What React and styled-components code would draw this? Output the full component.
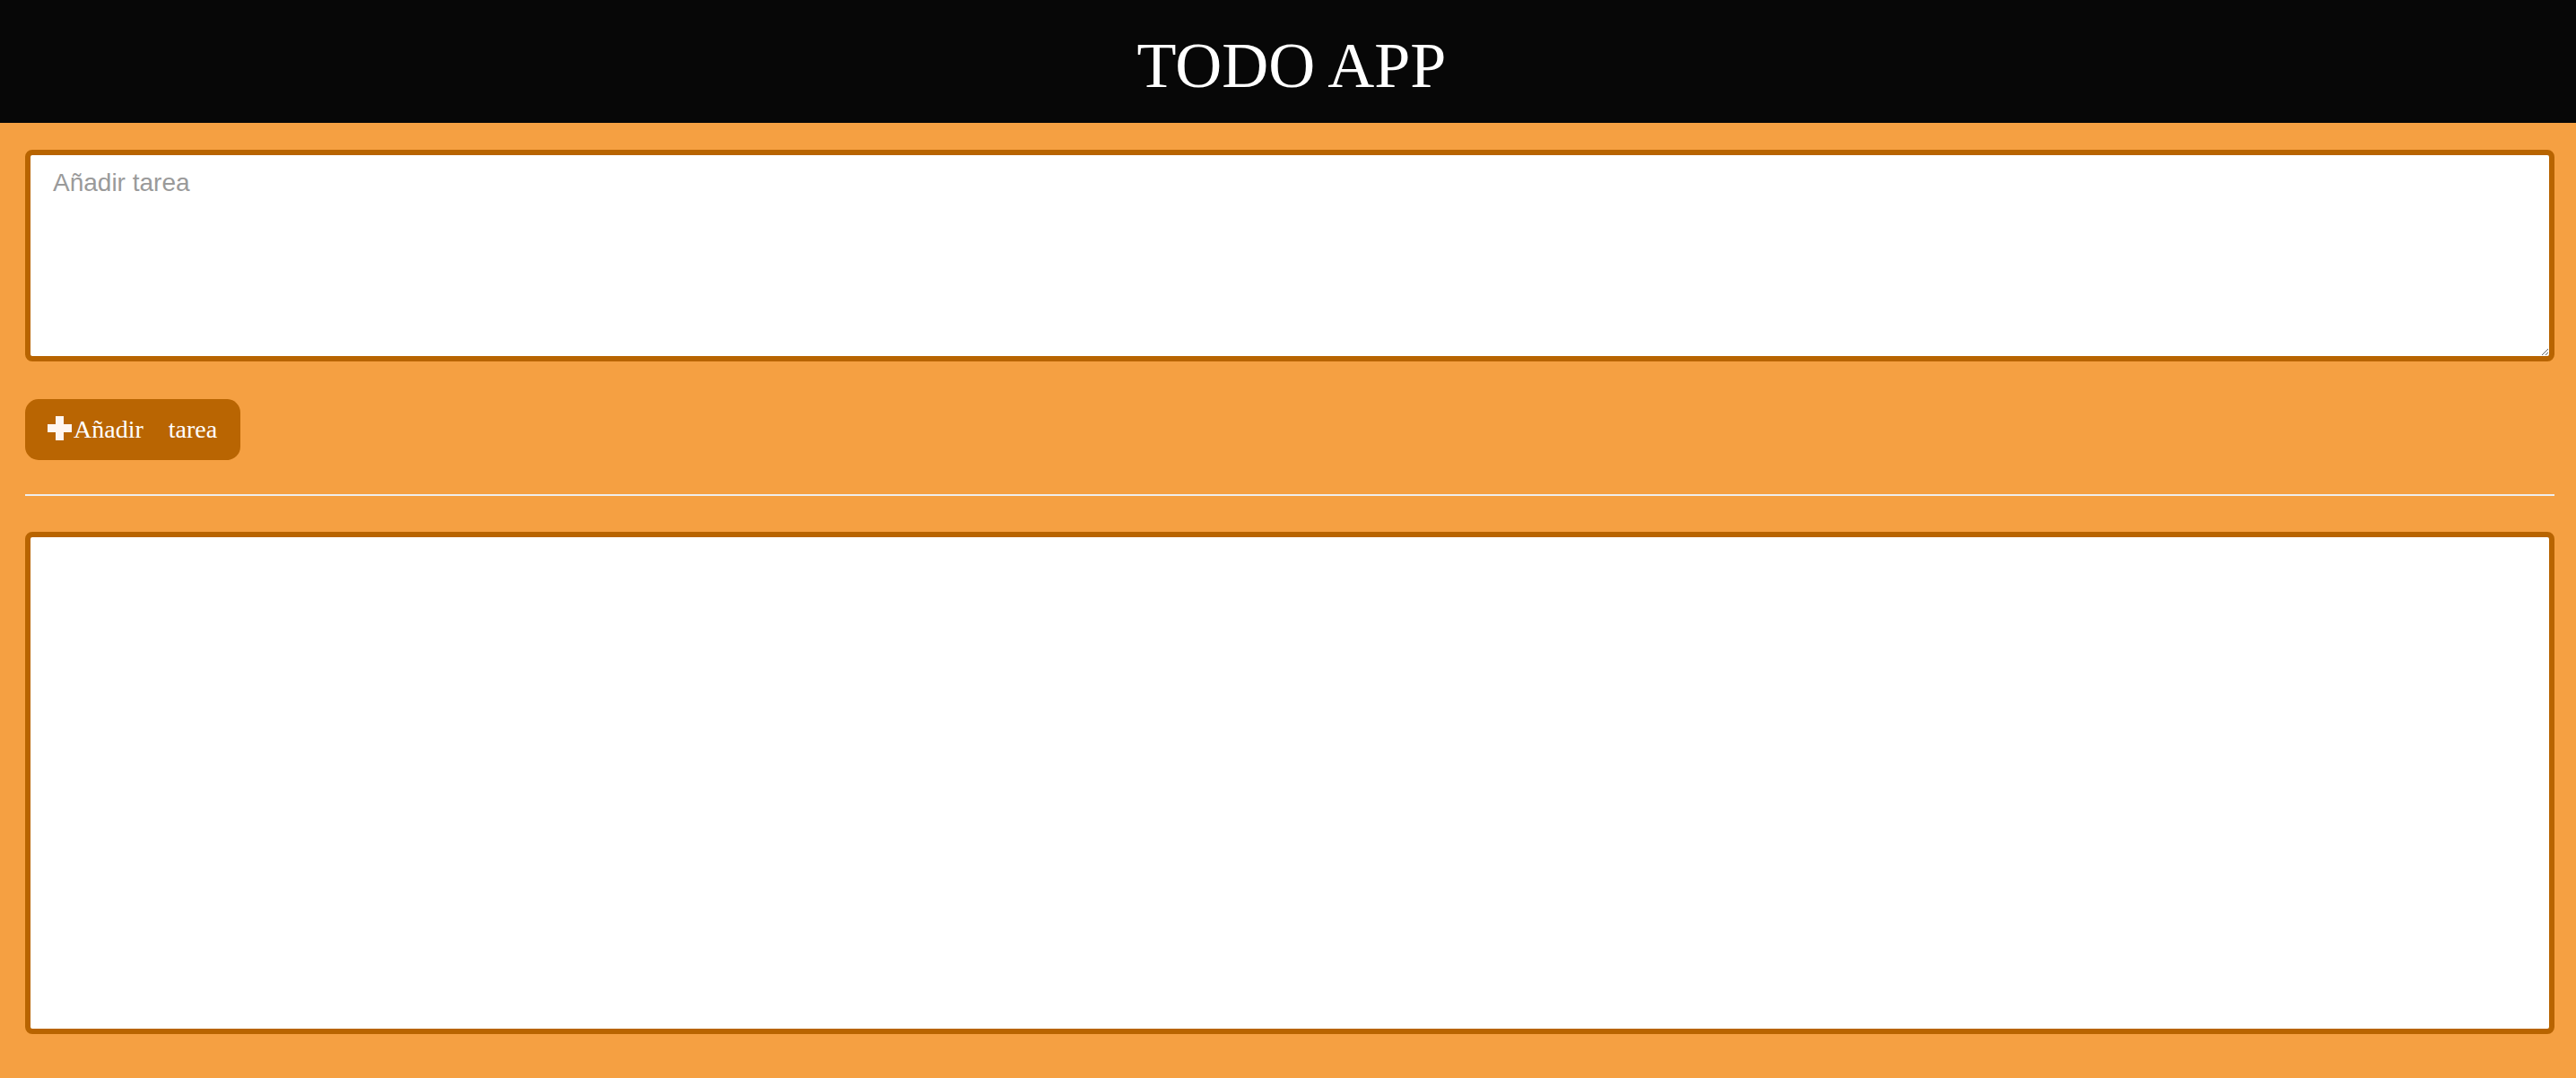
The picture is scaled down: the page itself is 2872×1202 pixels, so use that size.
import React, { useState } from "react";
import styled, { createGlobalStyle } from "styled-components";

const GlobalStyle = createGlobalStyle`
  html, body {
    margin: 0;
    padding: 0;
    background: #f5a042;
  }
  body {
    font-family: "Liberation Serif", "Times New Roman", serif;
  }
`;

const Page = styled.div`
  height: 100vh;
  overflow: hidden;
  background: #f5a042;
`;

const Header = styled.header`
  background: #070707;
  height: 137px;
  padding: 37px 0 0 8px;
  box-sizing: border-box;
  .title {
    margin: 0;
    text-align: center;
    color: #ffffff;
    font-size: 72px;
    font-weight: normal;
    line-height: 1;
  }
`;

const Main = styled.main`
  padding: 30px 24px 0 28px;
  display: flex;
  flex-direction: column;
`;

const TaskInput = styled.textarea`
  display: block;
  box-sizing: border-box;
  width: 100%;
  height: 236px;
  margin: 0;
  padding: 15px 25px;
  border: 6px solid #b86400;
  border-radius: 8px;
  background: #ffffff;
  font-family: "Liberation Sans", Arial, sans-serif;
  font-size: 28px;
  color: #333;
  outline: none;
  &::placeholder {
    color: #9a9a9a;
  }
`;

const AddButton = styled.button`
  align-self: flex-start;
  margin-top: 42px;
  height: 68px;
  display: inline-flex;
  align-items: center;
  gap: 2px;
  padding: 0 26px 0 25px;
  border: none;
  border-radius: 15px;
  background: #b96502;
  color: #ffffff;
  font-family: "Liberation Serif", "Times New Roman", serif;
  font-size: 28px;
  cursor: pointer;
  .word + .word {
    margin-left: 26px;
  }
`;

const PlusIcon = styled.svg`
  width: 27px;
  height: 27px;
  margin-top: -4px;
  fill: #fff6f0;
`;

const Divider = styled.hr`
  margin: 38px 0 0;
  border: none;
  height: 2px;
  background: #eeeeee;
`;

const TaskList = styled.ul`
  box-sizing: border-box;
  list-style: none;
  margin: 40px 0 0;
  padding: 0;
  height: 560px;
  border: 6px solid #b86400;
  border-radius: 8px;
  background: #ffffff;
`;

const Plus = () => (
  <PlusIcon viewBox="0 0 27 27">
    <path d="M9 0h9v9h9v9h-9v9H9v-9H0V9h9z" />
  </PlusIcon>
);

const App = () => {
  const [text, setText] = useState("");
  const [tasks, setTasks] = useState([]);

  const addTask = () => {
    if (!text.trim()) return;
    setTasks([...tasks, text.trim()]);
    setText("");
  };

  return (
    <Page>
      <GlobalStyle />
      <Header>
        <h1 className="title">TODO APP</h1>
      </Header>
      <Main>
        <TaskInput
          placeholder="Añadir tarea"
          value={text}
          onChange={(e) => setText(e.target.value)}
        />
        <AddButton onClick={addTask}>
          <Plus />
          <span className="word">Añadir</span>
          <span className="word">tarea</span>
        </AddButton>
        <Divider />
        <TaskList>
          {tasks.map((task, i) => (
            <li key={i}>{task}</li>
          ))}
        </TaskList>
      </Main>
    </Page>
  );
};

export default App;
